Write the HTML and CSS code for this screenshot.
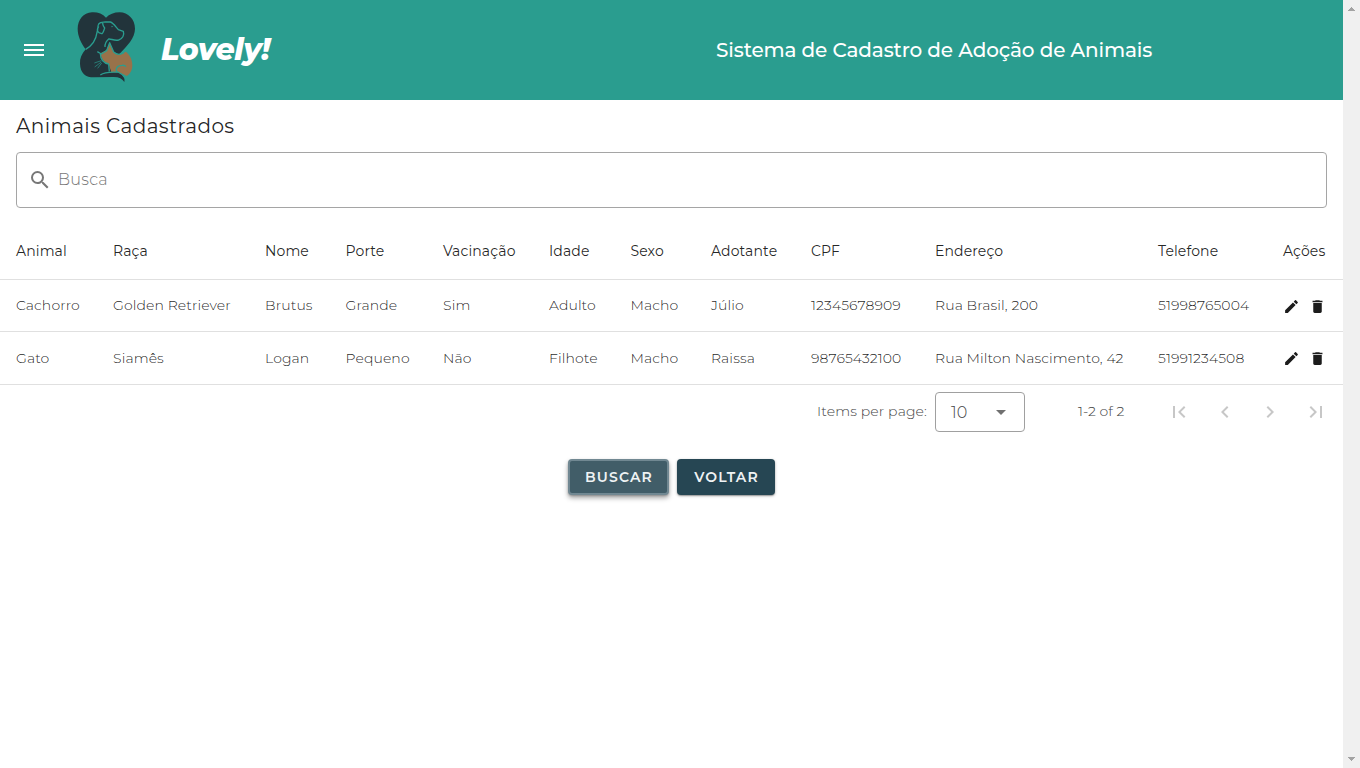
FILE: index.html
```html
<!DOCTYPE html>
<html lang="pt-BR">
<head>
<meta charset="utf-8">
<title>Lovely!</title>
<link rel="stylesheet" href="styles.css">
</head>
<body>
<div class="app">
<div class="page">
  <header class="topbar">
    <svg class="menu" viewBox="0 0 24 24"><path d="M2 18h20v-2H2v2zm0-5h20v-2H2v2zm0-7v2h20V6H2z"/></svg>
    <svg class="logo" viewBox="0 0 216 252">
      <path class="dark" d="M108 41C98 29 82 24 66 25C40 26 23 48 23 74C23 96 33 117 47 136C35 150 29 163 30 179C31 208 47 220 72 220L128 219C145 218 157 224 163 234C166 221 159 211 145 205L146 152C172 126 195 101 195 74C195 46 174 25 149 25C132 25 118 31 108 41Z"/>
      <path class="cat" d="M119 116L131 143Q148 160 167 143C179 151 187 166 187 183C187 199 180 210 170 216Q151 202 124 205L116 180C103 178 94 166 91 148L109 139Z"/>
      <path class="line" d="M47 136C66 125 78 108 81 85C85 77 82 66 86 60C91 53 99 55 106 54L121 54C129 56 134 64 145 77L160 82C164 94 157 105 146 108C132 111 124 104 116 105C109 111 104 117 105 129M99 54C96 61 99 65 104 72C101 80 99 89 95 89C83 86 78 80 86 67M82 143L94 150L110 140L119 116L131 144Q145 157 161 146M91 149C91 166 102 178 116 180L118 202M91 213C107 201 130 205 144 204Q158 210 166 223M140 203C136 193 142 184 156 184Q164 183 168 188"/>
      <path class="eye" d="M124 65l6 3-5 2z"/>
      <path class="whisker" d="M94 170L73 177M94 174L74 189M95 177L83 193"/>
    </svg>
    <div class="brand">Lovely!</div>
    <div class="system">Sistema de Cadastro de Adoção de Animais</div>
  </header>
  <main>
    <h1 class="title">Animais Cadastrados</h1>
    <div class="search">
      <svg viewBox="0 0 24 24"><path d="M15.5 14h-.79l-.28-.27A6.47 6.47 0 0 0 16 9.5 6.5 6.5 0 1 0 9.5 16c1.61 0 3.09-.59 4.23-1.57l.27.28v.79l5 4.99L20.49 19zm-6 0A4.5 4.5 0 1 1 9.5 5a4.5 4.5 0 0 1 0 9z"/></svg>
      <span>Busca</span>
    </div>
    <div class="table">
      <div class="row head"><span>Animal</span><span>Raça</span><span>Nome</span><span>Porte</span><span>Vacinação</span><span>Idade</span><span>Sexo</span><span>Adotante</span><span>CPF</span><span>Endereço</span><span>Telefone</span><span>Ações</span></div>
      <div class="row first"><span>Cachorro</span><span>Golden Retriever</span><span>Brutus</span><span>Grande</span><span>Sim</span><span>Adulto</span><span>Macho</span><span>Júlio</span><span>12345678909</span><span>Rua Brasil, 200</span><span>51998765004</span><span class="actions"><svg viewBox="0 0 24 24"><path d="M3 17.25V21h3.75L17.81 9.94l-3.75-3.75zM20.71 7.04a1 1 0 0 0 0-1.41l-2.34-2.34a1 1 0 0 0-1.41 0l-1.83 1.83 3.75 3.75z"/></svg><svg viewBox="0 0 24 24"><path d="M6 19c0 1.1.9 2 2 2h8c1.1 0 2-.9 2-2V7H6zM19 4h-3.5l-1-1h-5l-1 1H5v2h14z"/></svg></span></div>
      <div class="row last"><span>Gato</span><span>Siamês</span><span>Logan</span><span>Pequeno</span><span>Não</span><span>Filhote</span><span>Macho</span><span>Raissa</span><span>98765432100</span><span>Rua Milton Nascimento, 42</span><span>51991234508</span><span class="actions"><svg viewBox="0 0 24 24"><path d="M3 17.25V21h3.75L17.81 9.94l-3.75-3.75zM20.71 7.04a1 1 0 0 0 0-1.41l-2.34-2.34a1 1 0 0 0-1.41 0l-1.83 1.83 3.75 3.75z"/></svg><svg viewBox="0 0 24 24"><path d="M6 19c0 1.1.9 2 2 2h8c1.1 0 2-.9 2-2V7H6zM19 4h-3.5l-1-1h-5l-1 1H5v2h14z"/></svg></span></div>
    </div>
    <div class="pager">
      <span class="per-page">Items per page:</span>
      <div class="select"><span>10</span><i></i></div>
      <span class="range">1-2 of 2</span>
      <div class="nav">
        <svg viewBox="0 0 24 24"><path d="M18.41 16.59L13.82 12l4.59-4.59L17 6l-6 6 6 6zM6 6h2v12H6z"/></svg>
        <svg viewBox="0 0 24 24"><path d="M15.41 7.41L14 6l-6 6 6 6 1.41-1.41L10.83 12z"/></svg>
        <svg viewBox="0 0 24 24"><path d="M10 6L8.59 7.41 13.17 12l-4.58 4.59L10 18l6-6z"/></svg>
        <svg viewBox="0 0 24 24"><path d="M5.59 7.41L10.18 12l-4.59 4.59L7 18l6-6-6-6zM16 6h2v12h-2z"/></svg>
      </div>
    </div>
    <div class="buttons">
      <button class="btn focused">BUSCAR</button>
      <button class="btn voltar">VOLTAR</button>
    </div>
  </main>
</div>
<div class="scrollbar"><svg viewBox="0 0 7 4"><path d="M0 4V3h1V2h1V1h1V0h1v1h1v1h1v1h1v1z"/></svg><svg viewBox="0 0 7 4"><path d="M0 0v1h1v1h1v1h1v1h1V3h1V2h1V1h1V0z"/></svg></div>
</div>
</body>
</html>
```
FILE: styles.css
```css
* { box-sizing: border-box; }
body { margin: 0; background: #fff; color: rgba(0,0,0,.87); font-family: Montserrat, Inter, "Open Sans", sans-serif; overflow: hidden; }
svg { display: block; flex: none; }
.app { display: flex; height: 768px; }
.page { width: 1343px; }
.scrollbar { width: 17px; background: #f0f0f0; display: flex; flex-direction: column; justify-content: space-between; align-items: center; padding: 7px 0; }
.scrollbar svg { width: 7px; height: 4px; fill: #a3a3a3; shape-rendering: crispEdges; }
.topbar { height: 100px; background: #2a9d8f; color: #fff; display: flex; align-items: center; padding-left: 22px; white-space: nowrap; }
.menu { width: 24px; height: 24px; fill: #fff; }
.logo { width: 72px; height: 84px; margin: -8px 0 0 24px; }
.dark { fill: #22343b; }
.cat { fill: #98724a; }
.line { fill: none; stroke: #2a9d8f; stroke-width: 4; stroke-linejoin: round; }
.eye { fill: #2a9d8f; }
.whisker { fill: none; stroke: #2a9d8f; stroke-width: 2; }
.brand { width: 555px; margin: -2px 0 0 19px; font-size: 30px; font-weight: 800; font-style: italic; letter-spacing: -.45px; }
.system { font-size: 20px; font-weight: 500; letter-spacing: -.13px; }
.title { margin: 0; padding: 14px 16px 0; height: 52px; font-size: 20px; line-height: 24px; font-weight: 400; letter-spacing: .42px; }
.search { height: 56px; margin: 0 16px; border: 1px solid #a5a5a5; border-radius: 4px; display: flex; align-items: center; gap: 6px; padding-left: 11px; color: #777; font-size: 16px; font-weight: 300; letter-spacing: .25px; }
.search span { margin-top: -1px; }
.search svg { width: 24px; height: 24px; fill: #777; }
.table { margin-top: 15px; }
.row { display: grid; grid-template-columns: 97px 152px 80.5px 97.5px 106px 81.5px 80.5px 100px 124px 223px 125px 76px; height: 52px; align-items: center; border-bottom: 1px solid #e0e0e0; font-size: 14px; font-weight: 300; letter-spacing: .1px; white-space: nowrap; }
.row > span { padding-left: 16px; }
.row.head { height: 57px; font-weight: 400; letter-spacing: .12px; }
.row.first > span:not(.actions) { margin-top: -2px; }
.row.last { height: 53px; }
.row > .actions { display: flex; gap: 9px; padding-left: 16px; }
.actions svg { width: 17px; height: 17px; margin-top: 2px; fill: #1c1c1c; }
.last .actions svg { margin-top: 0; }
.pager { display: flex; align-items: center; height: 54px; color: #444; font-size: 14px; font-weight: 300; white-space: nowrap; }
.per-page { width: 118px; margin: -2px 0 0 817px; letter-spacing: .12px; }
.select { width: 90px; height: 40px; border: 1px solid #a0a0a0; border-radius: 4px; display: flex; align-items: center; justify-content: space-between; padding: 0 18px 0 15px; font-size: 16px; }
.select i { border: 5px solid transparent; border-top-color: #707070; border-bottom: 0; }
.range { margin: -2px 0 0 53px; width: 89px; }
.nav { display: flex; gap: 21.7px; }
.nav svg { width: 24px; height: 24px; fill: #c7c7c7; }
.buttons { display: flex; justify-content: center; gap: 8px; margin-top: 20px; }
.btn { width: 101px; height: 36px; padding: 0 0 0 1px; border: 0; border-radius: 4px; background: #264653; color: #eff3f4; font: 600 14px Montserrat, Inter, sans-serif; letter-spacing: 1.15px; box-shadow: 0 1px 3px rgba(0,0,0,.3), 0 1px 1px rgba(0,0,0,.2); }
.btn.focused { background: #415d68; border: 2px solid #718892; box-shadow: 0 3px 5px rgba(0,0,0,.35), 0 1px 2px rgba(0,0,0,.2); }
.btn.voltar { width: 98px; }
```
